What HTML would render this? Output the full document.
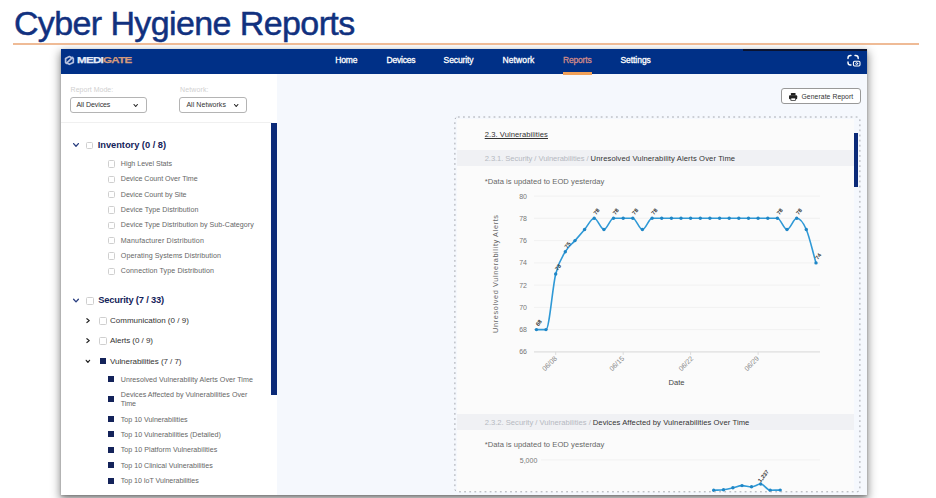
<!DOCTYPE html>
<html lang="en"><head><meta charset="utf-8"><title>Cyber Hygiene Reports</title>
<style>
html,body{margin:0;padding:0;}
body{width:936px;height:498px;overflow:hidden;background:#fff;position:relative;font-family:"Liberation Sans", sans-serif;}
.abs{position:absolute;}
.t{position:absolute;white-space:pre;}
svg text{font-family:"Liberation Sans", sans-serif;}
</style></head><body>
<!-- app window -->
<div class="abs" style="left:60.5px;top:49px;width:806.5px;height:445.9px;background:#f5f8fd;box-shadow:0 4px 9px 1px rgba(0,0,0,.45), 0 1px 2px rgba(0,0,0,.22)"></div>
<!-- navbar -->
<div class="abs" style="left:60.5px;top:49px;width:806.3px;height:24.5px;background:#003087"></div>
<div class="abs" style="left:743.4px;top:49px;width:123.6px;height:1.6px;background:#0a1330"></div>
<div class="abs" style="left:563px;top:72px;width:28.5px;height:2.6px;background:#f0a058"></div>
<!-- orange rule -->
<div class="abs" style="left:13px;top:43px;width:905.5px;height:1.6px;background:#efbb96"></div>
<!-- sidebar -->
<div class="abs" style="left:60.5px;top:73.6px;width:216.7px;height:421.3px;background:#fff"></div>
<div class="abs" style="left:60.5px;top:122.4px;width:211px;height:1px;background:#f0f0f0"></div>
<div class="abs" style="left:271.3px;top:123.4px;width:5.9px;height:271.6px;background:#0b2a78"></div>
<div class="abs" style="left:70px;top:97.4px;width:75.2px;height:13.6px;border:1px solid #b4b4b4;border-radius:3px;background:#fff"></div>
<div class="abs" style="left:179px;top:97.4px;width:66.2px;height:13.6px;border:1px solid #b4b4b4;border-radius:3px;background:#fff"></div>
<!-- main -->
<div class="abs" style="left:781.1px;top:88.1px;width:77.8px;height:13.8px;border:1px solid #999;border-radius:3px;background:#fff"></div>
<div class="abs" style="left:457px;top:119px;width:396.5px;height:373px;background:#fbfbfb"></div>
<div class="abs" style="left:457px;top:149.6px;width:397px;height:16.9px;background:#f0f1f4"></div>
<div class="abs" style="left:457px;top:414.4px;width:397px;height:15.8px;background:#f0f1f4"></div>
<div class="abs" style="left:853.7px;top:132.9px;width:4.8px;height:54.1px;background:#0b2a78"></div>
<svg class="abs" style="left:0;top:0" width="936" height="498" viewBox="0 0 936 498">
<line x1="534" x2="820" y1="351.9" y2="351.9" stroke="#f1f1f1" stroke-width="1"/>
<text x="527" y="354.4" font-size="7" fill="#777" text-anchor="end">66</text>
<line x1="534" x2="820" y1="329.6" y2="329.6" stroke="#f1f1f1" stroke-width="1"/>
<text x="527" y="332.1" font-size="7" fill="#777" text-anchor="end">68</text>
<line x1="534" x2="820" y1="307.4" y2="307.4" stroke="#f1f1f1" stroke-width="1"/>
<text x="527" y="309.9" font-size="7" fill="#777" text-anchor="end">70</text>
<line x1="534" x2="820" y1="285.1" y2="285.1" stroke="#f1f1f1" stroke-width="1"/>
<text x="527" y="287.6" font-size="7" fill="#777" text-anchor="end">72</text>
<line x1="534" x2="820" y1="262.9" y2="262.9" stroke="#f1f1f1" stroke-width="1"/>
<text x="527" y="265.4" font-size="7" fill="#777" text-anchor="end">74</text>
<line x1="534" x2="820" y1="240.6" y2="240.6" stroke="#f1f1f1" stroke-width="1"/>
<text x="527" y="243.1" font-size="7" fill="#777" text-anchor="end">76</text>
<line x1="534" x2="820" y1="218.3" y2="218.3" stroke="#f1f1f1" stroke-width="1"/>
<text x="527" y="220.8" font-size="7" fill="#777" text-anchor="end">78</text>
<line x1="534" x2="820" y1="196.1" y2="196.1" stroke="#f1f1f1" stroke-width="1"/>
<text x="527" y="198.6" font-size="7" fill="#777" text-anchor="end">80</text>
<path d="M536.4,329.6C539.6,329.6 542.8,329.6 546.0,329.6C549.3,329.6 552.5,287.0 555.7,274.0C558.9,261.0 562.1,257.3 565.3,251.7C568.5,246.2 571.7,244.3 575.0,240.6C578.2,236.9 581.4,233.2 584.6,229.5C587.8,225.8 591.0,218.3 594.2,218.3C597.5,218.3 600.7,229.5 603.9,229.5C607.1,229.5 610.3,218.3 613.5,218.3C616.7,218.3 619.9,218.3 623.2,218.3C626.4,218.3 629.6,218.3 632.8,218.3C636.0,218.3 639.2,229.5 642.4,229.5C645.7,229.5 648.9,218.3 652.1,218.3C655.3,218.3 658.5,218.3 661.7,218.3C664.9,218.3 668.1,218.3 671.4,218.3C674.6,218.3 677.8,218.3 681.0,218.3C684.2,218.3 687.4,218.3 690.6,218.3C693.9,218.3 697.1,218.3 700.3,218.3C703.5,218.3 706.7,218.3 709.9,218.3C713.1,218.3 716.3,218.3 719.6,218.3C722.8,218.3 726.0,218.3 729.2,218.3C732.4,218.3 735.6,218.3 738.8,218.3C742.1,218.3 745.3,218.3 748.5,218.3C751.7,218.3 754.9,218.3 758.1,218.3C761.3,218.3 764.5,218.3 767.8,218.3C771.0,218.3 774.2,218.3 777.4,218.3C780.6,218.3 783.8,229.5 787.0,229.5C790.3,229.5 793.5,218.3 796.7,218.3C799.9,218.3 803.1,222.1 806.3,229.5C809.5,236.9 812.7,251.7 816.0,262.9" fill="none" stroke="#2f99d6" stroke-width="1.6" stroke-linejoin="round"/>
<circle cx="536.4" cy="329.6" r="1.7" fill="#1f86c6"/>
<circle cx="546.0" cy="329.6" r="1.7" fill="#1f86c6"/>
<circle cx="555.7" cy="274.0" r="1.7" fill="#1f86c6"/>
<circle cx="565.3" cy="251.7" r="1.7" fill="#1f86c6"/>
<circle cx="575.0" cy="240.6" r="1.7" fill="#1f86c6"/>
<circle cx="584.6" cy="229.5" r="1.7" fill="#1f86c6"/>
<circle cx="594.2" cy="218.3" r="1.7" fill="#1f86c6"/>
<circle cx="603.9" cy="229.5" r="1.7" fill="#1f86c6"/>
<circle cx="613.5" cy="218.3" r="1.7" fill="#1f86c6"/>
<circle cx="623.2" cy="218.3" r="1.7" fill="#1f86c6"/>
<circle cx="632.8" cy="218.3" r="1.7" fill="#1f86c6"/>
<circle cx="642.4" cy="229.5" r="1.7" fill="#1f86c6"/>
<circle cx="652.1" cy="218.3" r="1.7" fill="#1f86c6"/>
<circle cx="661.7" cy="218.3" r="1.7" fill="#1f86c6"/>
<circle cx="671.4" cy="218.3" r="1.7" fill="#1f86c6"/>
<circle cx="681.0" cy="218.3" r="1.7" fill="#1f86c6"/>
<circle cx="690.6" cy="218.3" r="1.7" fill="#1f86c6"/>
<circle cx="700.3" cy="218.3" r="1.7" fill="#1f86c6"/>
<circle cx="709.9" cy="218.3" r="1.7" fill="#1f86c6"/>
<circle cx="719.6" cy="218.3" r="1.7" fill="#1f86c6"/>
<circle cx="729.2" cy="218.3" r="1.7" fill="#1f86c6"/>
<circle cx="738.8" cy="218.3" r="1.7" fill="#1f86c6"/>
<circle cx="748.5" cy="218.3" r="1.7" fill="#1f86c6"/>
<circle cx="758.1" cy="218.3" r="1.7" fill="#1f86c6"/>
<circle cx="767.8" cy="218.3" r="1.7" fill="#1f86c6"/>
<circle cx="777.4" cy="218.3" r="1.7" fill="#1f86c6"/>
<circle cx="787.0" cy="229.5" r="1.7" fill="#1f86c6"/>
<circle cx="796.7" cy="218.3" r="1.7" fill="#1f86c6"/>
<circle cx="806.3" cy="229.5" r="1.7" fill="#1f86c6"/>
<circle cx="816.0" cy="262.9" r="1.7" fill="#1f86c6"/>
<text transform="translate(538.4,326.6) rotate(-53)" font-size="5.6" font-weight="700" fill="#333">68</text>
<text transform="translate(557.7,271.0) rotate(-53)" font-size="5.6" font-weight="700" fill="#333">73</text>
<text transform="translate(567.3,248.7) rotate(-53)" font-size="5.6" font-weight="700" fill="#333">75</text>
<text transform="translate(596.2,215.3) rotate(-53)" font-size="5.6" font-weight="700" fill="#333">78</text>
<text transform="translate(615.5,215.3) rotate(-53)" font-size="5.6" font-weight="700" fill="#333">78</text>
<text transform="translate(634.8,215.3) rotate(-53)" font-size="5.6" font-weight="700" fill="#333">78</text>
<text transform="translate(654.1,215.3) rotate(-53)" font-size="5.6" font-weight="700" fill="#333">78</text>
<text transform="translate(779.4,215.3) rotate(-53)" font-size="5.6" font-weight="700" fill="#333">78</text>
<text transform="translate(798.7,215.3) rotate(-53)" font-size="5.6" font-weight="700" fill="#333">78</text>
<text transform="translate(818.0,259.9) rotate(-53)" font-size="5.6" font-weight="700" fill="#333">74</text>
<text transform="translate(557.5,359.0) rotate(-45)" font-size="7" fill="#888" text-anchor="end">06/08</text>
<text transform="translate(624.7,359.0) rotate(-45)" font-size="7" fill="#888" text-anchor="end">06/15</text>
<text transform="translate(693.8,359.0) rotate(-45)" font-size="7" fill="#888" text-anchor="end">06/22</text>
<text transform="translate(759.6,359.0) rotate(-45)" font-size="7" fill="#888" text-anchor="end">06/29</text>
<line x1="534" x2="820" y1="351.9" y2="351.9" stroke="#dcdcdc" stroke-width="1"/>
<line x1="555.7" x2="555.7" y1="351.9" y2="354.9" stroke="#dcdcdc" stroke-width="1"/>
<line x1="623.2" x2="623.2" y1="351.9" y2="354.9" stroke="#dcdcdc" stroke-width="1"/>
<line x1="690.6" x2="690.6" y1="351.9" y2="354.9" stroke="#dcdcdc" stroke-width="1"/>
<line x1="758.1" x2="758.1" y1="351.9" y2="354.9" stroke="#dcdcdc" stroke-width="1"/>
<text x="676.5" y="385.2" font-size="7.6" fill="#444" text-anchor="middle">Date</text>
<text transform="translate(498.2,274) rotate(-90)" font-size="7.3" fill="#666" text-anchor="middle" textLength="118">Unresolved Vulnerability Alerts</text>
<line x1="541" x2="820" y1="459.9" y2="459.9" stroke="#f1f1f1" stroke-width="1"/>
<text x="537.3" y="463.2" font-size="7" fill="#777" text-anchor="end">5,000</text>
<path d="M713.7,490.3C717.0,490.1 720.2,490.1 723.5,489.7C726.6,489.3 729.8,488.5 732.9,487.8C735.9,487.1 739.0,485.6 742.0,485.6C745.2,485.6 748.3,486.8 751.5,486.8C754.6,486.8 757.6,484.0 760.7,484.0C763.9,484.0 767.0,490.2 770.2,490.2C773.5,490.2 776.9,490.1 780.2,490.1" fill="none" stroke="#2f99d6" stroke-width="1.6"/>
<circle cx="713.7" cy="490.3" r="1.7" fill="#1f86c6"/>
<circle cx="723.5" cy="489.7" r="1.7" fill="#1f86c6"/>
<circle cx="732.9" cy="487.8" r="1.7" fill="#1f86c6"/>
<circle cx="742.0" cy="485.6" r="1.7" fill="#1f86c6"/>
<circle cx="751.5" cy="486.8" r="1.7" fill="#1f86c6"/>
<circle cx="760.7" cy="484.0" r="1.7" fill="#1f86c6"/>
<circle cx="770.2" cy="490.2" r="1.7" fill="#1f86c6"/>
<circle cx="780.2" cy="490.1" r="1.7" fill="#1f86c6"/>
<text transform="translate(760.6,482.8) rotate(-52)" font-size="5.6" font-weight="700" fill="#333">1,237</text>
<rect x="454.9" y="117" width="405" height="374.8" rx="3" fill="none" stroke="#a4a7ae" stroke-width="1" stroke-dasharray="1.8 3.3"/>
<path d="M134.0,104.5 L135.7,106.5 L137.4,104.5" fill="none" stroke="#222" stroke-width="1.1" stroke-linecap="round" stroke-linejoin="round"/>
<path d="M234.5,104.5 L236.2,106.5 L237.9,104.5" fill="none" stroke="#222" stroke-width="1.1" stroke-linecap="round" stroke-linejoin="round"/>
<path d="M73.6,143.6 L76.0,146.2 L78.4,143.6" fill="none" stroke="#2a3f80" stroke-width="1.3" stroke-linecap="round" stroke-linejoin="round"/>
<path d="M73.6,299.3 L76.0,301.9 L78.4,299.3" fill="none" stroke="#2a3f80" stroke-width="1.3" stroke-linecap="round" stroke-linejoin="round"/>
<path d="M86.9,318.7 L89.3,320.6 L86.9,322.5" fill="none" stroke="#222" stroke-width="1.2" stroke-linecap="round" stroke-linejoin="round"/>
<path d="M86.9,338.7 L89.3,340.6 L86.9,342.5" fill="none" stroke="#222" stroke-width="1.2" stroke-linecap="round" stroke-linejoin="round"/>
<path d="M86.2,360.3 L87.9,362.3 L89.6,360.3" fill="none" stroke="#222" stroke-width="1.2" stroke-linecap="round" stroke-linejoin="round"/>
<g fill="none" stroke="#b5c1df" stroke-width="1.7" stroke-linejoin="round" stroke-linecap="round"><path d="M65.6,58.4 L69.4,56.6 L73.3,58.4 L73.3,62.4 L69.4,64.3 L65.6,62.4 Z"/><path d="M66.4,63.4 L72.6,57.4"/></g>
<g fill="none" stroke="#fff" stroke-width="1.4" stroke-linecap="round" stroke-linejoin="round"><path d="M848,58.6 V58 Q848,55.5 850.5,55.5 H851"/><path d="M855,55.5 H855.6 Q858.2,55.5 858.2,58 V58.6"/><path d="M848,62 V62.4 Q848,65 850.5,65 H851"/><rect x="853.4" y="61.2" width="6.6" height="4.8" rx="1.2" stroke-width="1.1"/><circle cx="856.7" cy="63.6" r="1" stroke-width="0.9"/></g>
<g fill="#222"><rect x="790.9" y="93" width="4.6" height="2.6" rx="0.4"/><rect x="789" y="95.2" width="8.2" height="4" rx="1"/><rect x="790.9" y="98" width="4.6" height="2.6" fill="#fff" stroke="#222" stroke-width="0.7"/></g>
</svg>
<div class="abs" style="left:85.6px;top:141.5px;width:5.8px;height:5.8px;border:0.6px solid #cfcfcf;border-radius:1.5px;background:#fff"></div>
<div class="abs" style="left:107.8px;top:160.4px;width:5.4px;height:5.4px;border:0.6px solid #cfcfcf;border-radius:1.5px;background:#fff"></div>
<div class="abs" style="left:107.8px;top:175.7px;width:5.4px;height:5.4px;border:0.6px solid #cfcfcf;border-radius:1.5px;background:#fff"></div>
<div class="abs" style="left:107.8px;top:191.0px;width:5.4px;height:5.4px;border:0.6px solid #cfcfcf;border-radius:1.5px;background:#fff"></div>
<div class="abs" style="left:107.8px;top:206.3px;width:5.4px;height:5.4px;border:0.6px solid #cfcfcf;border-radius:1.5px;background:#fff"></div>
<div class="abs" style="left:107.8px;top:221.6px;width:5.4px;height:5.4px;border:0.6px solid #cfcfcf;border-radius:1.5px;background:#fff"></div>
<div class="abs" style="left:107.8px;top:236.9px;width:5.4px;height:5.4px;border:0.6px solid #cfcfcf;border-radius:1.5px;background:#fff"></div>
<div class="abs" style="left:107.8px;top:252.3px;width:5.4px;height:5.4px;border:0.6px solid #cfcfcf;border-radius:1.5px;background:#fff"></div>
<div class="abs" style="left:107.8px;top:267.6px;width:5.4px;height:5.4px;border:0.6px solid #cfcfcf;border-radius:1.5px;background:#fff"></div>
<div class="abs" style="left:85.8px;top:296.8px;width:5.8px;height:5.8px;border:0.6px solid #cfcfcf;border-radius:1.5px;background:#fff"></div>
<div class="abs" style="left:99.0px;top:317.2px;width:5.6px;height:5.6px;border:0.6px solid #cfcfcf;border-radius:1.5px;background:#fff"></div>
<div class="abs" style="left:99.0px;top:337.3px;width:5.6px;height:5.6px;border:0.6px solid #cfcfcf;border-radius:1.5px;background:#fff"></div>
<div class="abs" style="left:99.7px;top:357.9px;width:6px;height:6px;background:#14235a"></div>
<div class="abs" style="left:108.3px;top:376.3px;width:6px;height:6px;background:#14235a"></div>
<div class="abs" style="left:108.3px;top:396.4px;width:6px;height:6px;background:#14235a"></div>
<div class="abs" style="left:108.3px;top:416.4px;width:6px;height:6px;background:#14235a"></div>
<div class="abs" style="left:108.3px;top:431.3px;width:6px;height:6px;background:#14235a"></div>
<div class="abs" style="left:108.3px;top:446.6px;width:6px;height:6px;background:#14235a"></div>
<div class="abs" style="left:108.3px;top:462.1px;width:6px;height:6px;background:#14235a"></div>
<div class="abs" style="left:108.3px;top:477.5px;width:6px;height:6px;background:#14235a"></div>
<div class="t" style="left:13.9px;top:1.1px;font-size:34px;line-height:44.2px;letter-spacing:-0.604px;color:#11317f;font-weight:400;-webkit-text-stroke:0.5px #11317f;">Cyber Hygiene Reports</div>
<div class="t" style="left:77.2px;top:54.0px;font-size:9.6px;line-height:12.5px;letter-spacing:-0.579px;color:#e6ebf7;font-weight:700;-webkit-text-stroke:0.25px #e6ebf7;transform:scaleX(1.2);transform-origin:0 50%;">MEDI</div>
<div class="t" style="left:103.2px;top:54.0px;font-size:9.6px;line-height:12.5px;letter-spacing:-0.526px;color:#d39a7c;font-weight:700;-webkit-text-stroke:0.25px #d39a7c;transform:scaleX(1.2);transform-origin:0 50%;">GATE</div>
<div class="t" style="left:335.2px;top:55.0px;font-size:8.5px;line-height:11.1px;letter-spacing:-0.097px;color:#ffffff;font-weight:400;-webkit-text-stroke:0.3px #fff;">Home</div>
<div class="t" style="left:386.6px;top:55.0px;font-size:8.5px;line-height:11.1px;letter-spacing:-0.219px;color:#ffffff;font-weight:400;-webkit-text-stroke:0.3px #fff;">Devices</div>
<div class="t" style="left:443.6px;top:55.0px;font-size:8.5px;line-height:11.1px;letter-spacing:-0.102px;color:#ffffff;font-weight:400;-webkit-text-stroke:0.3px #fff;">Security</div>
<div class="t" style="left:502.4px;top:55.0px;font-size:8.5px;line-height:11.1px;letter-spacing:0.130px;color:#ffffff;font-weight:400;-webkit-text-stroke:0.3px #fff;">Network</div>
<div class="t" style="left:620.4px;top:55.0px;font-size:8.5px;line-height:11.1px;letter-spacing:-0.040px;color:#ffffff;font-weight:400;-webkit-text-stroke:0.3px #fff;">Settings</div>
<div class="t" style="left:563.0px;top:55.0px;font-size:8.5px;line-height:11.1px;letter-spacing:-0.181px;color:#cf8a88;font-weight:400;-webkit-text-stroke:0.3px #cf8a88;">Reports</div>
<div class="t" style="left:70.6px;top:85.0px;font-size:7px;line-height:9.1px;letter-spacing:0.015px;color:#d0d0d0;font-weight:400;">Report Mode:</div>
<div class="t" style="left:180.0px;top:85.0px;font-size:7px;line-height:9.1px;letter-spacing:0.122px;color:#d0d0d0;font-weight:400;">Network:</div>
<div class="t" style="left:76.5px;top:100.0px;font-size:7px;line-height:9.1px;letter-spacing:-0.075px;color:#333;font-weight:400;">All Devices</div>
<div class="t" style="left:186.4px;top:100.0px;font-size:7px;line-height:9.1px;letter-spacing:0.058px;color:#333;font-weight:400;">All Networks</div>
<div class="t" style="left:97.7px;top:139.0px;font-size:9.3px;line-height:12.1px;letter-spacing:-0.025px;color:#14235a;font-weight:700;">Inventory (0 / 8)</div>
<div class="t" style="left:120.8px;top:160.0px;font-size:7.1px;line-height:9.2px;letter-spacing:-0.029px;color:#666;font-weight:400;">High Level Stats</div>
<div class="t" style="left:120.8px;top:175.1px;font-size:7.1px;line-height:9.2px;letter-spacing:-0.022px;color:#666;font-weight:400;">Device Count Over Time</div>
<div class="t" style="left:120.8px;top:190.9px;font-size:7.1px;line-height:9.2px;letter-spacing:-0.027px;color:#666;font-weight:400;">Device Count by Site</div>
<div class="t" style="left:120.8px;top:206.2px;font-size:7.1px;line-height:9.2px;letter-spacing:0.056px;color:#666;font-weight:400;">Device Type Distribution</div>
<div class="t" style="left:120.8px;top:221.0px;font-size:7.1px;line-height:9.2px;letter-spacing:0.036px;color:#666;font-weight:400;">Device Type Distribution by Sub-Category</div>
<div class="t" style="left:120.8px;top:236.8px;font-size:7.1px;line-height:9.2px;letter-spacing:0.158px;color:#666;font-weight:400;">Manufacturer Distribution</div>
<div class="t" style="left:120.8px;top:252.1px;font-size:7.1px;line-height:9.2px;letter-spacing:0.081px;color:#666;font-weight:400;">Operating Systems Distribution</div>
<div class="t" style="left:120.8px;top:267.2px;font-size:7.1px;line-height:9.2px;letter-spacing:0.094px;color:#666;font-weight:400;">Connection Type Distribution</div>
<div class="t" style="left:98.2px;top:294.1px;font-size:9.3px;line-height:12.1px;letter-spacing:-0.178px;color:#14235a;font-weight:700;">Security (7 / 33)</div>
<div class="t" style="left:110.0px;top:316.1px;font-size:8px;line-height:10.4px;letter-spacing:0.005px;color:#333;font-weight:400;">Communication (0 / 9)</div>
<div class="t" style="left:110.0px;top:336.2px;font-size:8px;line-height:10.4px;letter-spacing:-0.048px;color:#333;font-weight:400;">Alerts (0 / 9)</div>
<div class="t" style="left:110.0px;top:356.6px;font-size:8px;line-height:10.4px;letter-spacing:-0.053px;color:#333;font-weight:400;">Vulnerabilities (7 / 7)</div>
<div class="t" style="left:120.8px;top:375.9px;font-size:7.1px;line-height:9.2px;letter-spacing:0.036px;color:#666;font-weight:400;">Unresolved Vulnerability Alerts Over Time</div>
<div class="t" style="left:120.8px;top:390.5px;font-size:7.1px;line-height:9.2px;letter-spacing:0.030px;color:#666;font-weight:400;">Devices Affected by Vulnerabilities Over</div>
<div class="t" style="left:120.8px;top:400.0px;font-size:7.1px;line-height:9.2px;letter-spacing:-0.079px;color:#666;font-weight:400;">Time</div>
<div class="t" style="left:120.8px;top:416.0px;font-size:7.1px;line-height:9.2px;letter-spacing:-0.017px;color:#666;font-weight:400;">Top 10 Vulnerabilities</div>
<div class="t" style="left:120.8px;top:430.9px;font-size:7.1px;line-height:9.2px;letter-spacing:0.003px;color:#666;font-weight:400;">Top 10 Vulnerabilities (Detailed)</div>
<div class="t" style="left:120.8px;top:446.0px;font-size:7.1px;line-height:9.2px;letter-spacing:0.030px;color:#666;font-weight:400;">Top 10 Platform Vulnerabilities</div>
<div class="t" style="left:120.8px;top:461.8px;font-size:7.1px;line-height:9.2px;letter-spacing:-0.004px;color:#666;font-weight:400;">Top 10 Clinical Vulnerabilities</div>
<div class="t" style="left:120.8px;top:477.1px;font-size:7.1px;line-height:9.2px;letter-spacing:-0.053px;color:#666;font-weight:400;">Top 10 IoT Vulnerabilities</div>
<div class="t" style="left:801.5px;top:93.2px;font-size:6.8px;line-height:8.8px;letter-spacing:0.077px;color:#333;font-weight:400;">Generate Report</div>
<div class="t" style="left:484.7px;top:130.0px;font-size:7.6px;line-height:9.9px;letter-spacing:0.076px;color:#333;font-weight:400;text-decoration:underline;">2.3. Vulnerabilities</div>
<div class="t" style="left:484.7px;top:153.6px;font-size:7.6px;line-height:9.9px;letter-spacing:-0.063px;color:#b6b9c1;font-weight:400;">2.3.1. Security / Vulnerabilities /</div>
<div class="t" style="left:590.6px;top:153.6px;font-size:7.6px;line-height:9.9px;letter-spacing:0.116px;color:#333;font-weight:400;">Unresolved Vulnerability Alerts Over Time</div>
<div class="t" style="left:484.7px;top:176.6px;font-size:7.6px;line-height:9.9px;letter-spacing:0.045px;color:#666;font-weight:400;">*Data is updated to EOD yesterday</div>
<div class="t" style="left:484.7px;top:418.2px;font-size:7.6px;line-height:9.9px;letter-spacing:0.000px;color:#b6b9c1;font-weight:400;">2.3.2. Security / Vulnerabilities /</div>
<div class="t" style="left:592.8px;top:418.2px;font-size:7.6px;line-height:9.9px;letter-spacing:0.085px;color:#333;font-weight:400;">Devices Affected by Vulnerabilities Over Time</div>
<div class="t" style="left:484.7px;top:440.0px;font-size:7.6px;line-height:9.9px;letter-spacing:0.045px;color:#666;font-weight:400;">*Data is updated to EOD yesterday</div>

</body></html>
